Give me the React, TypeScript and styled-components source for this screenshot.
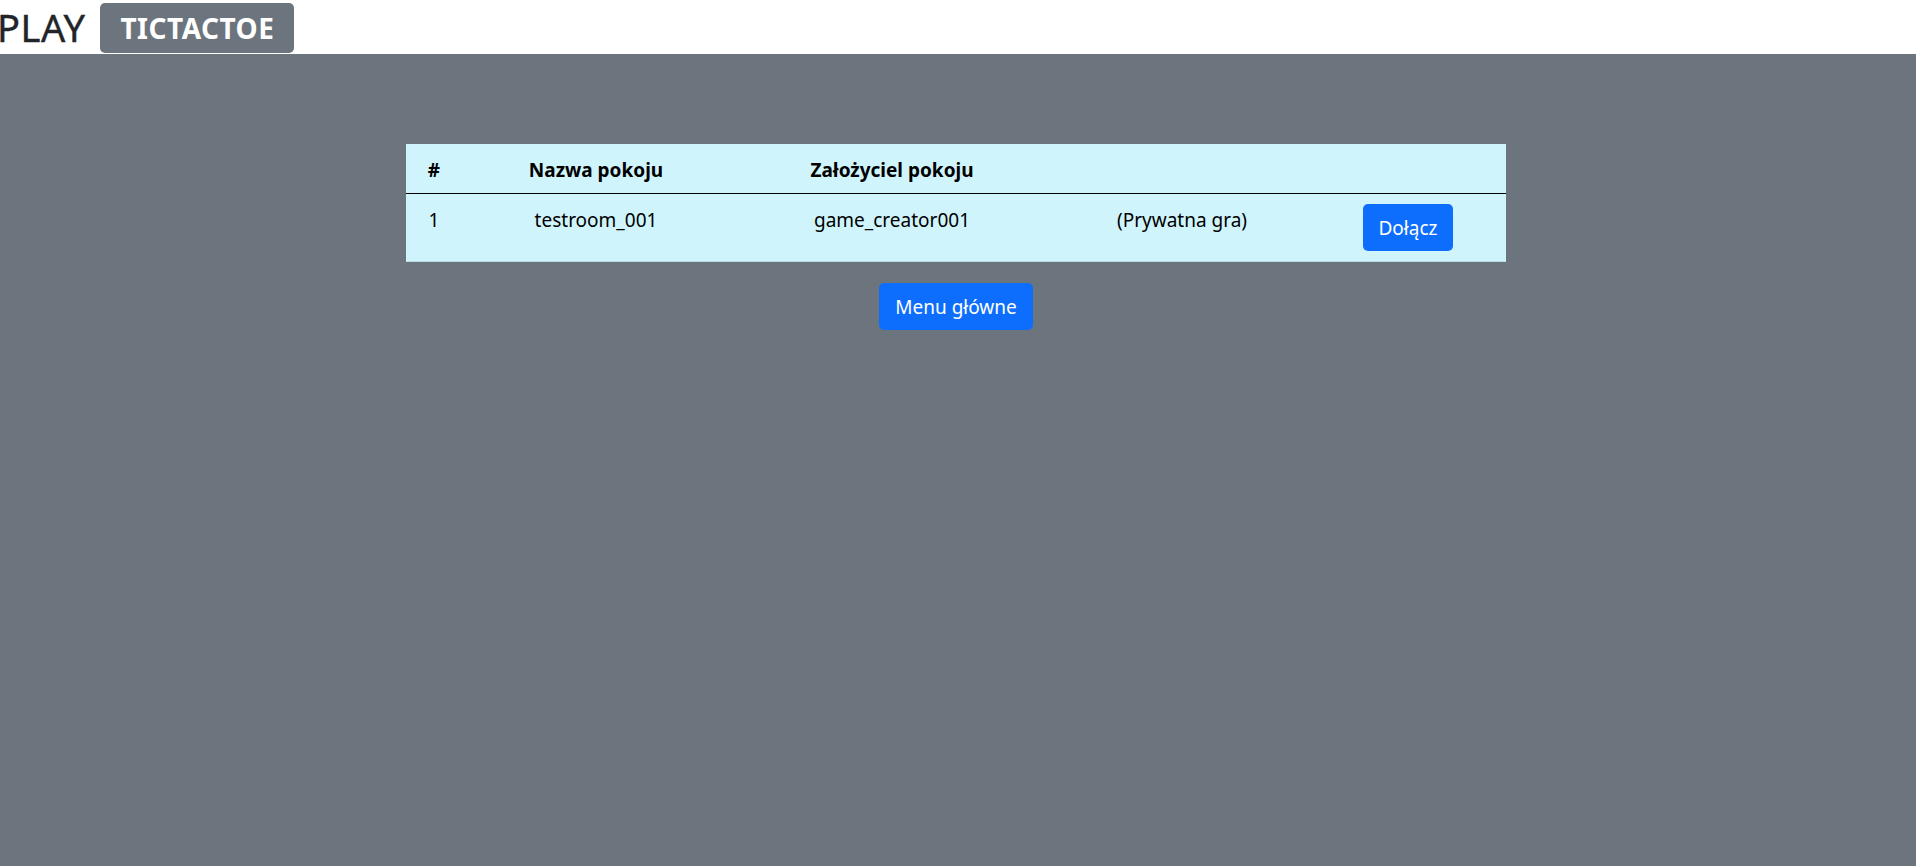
import styled, { createGlobalStyle } from "styled-components";

const GlobalStyle = createGlobalStyle`
  html, body {
    margin: 0;
    padding: 0;
    background-color: #6c757d;
  }

  body {
    font-family: "Noto Sans", "Open Sans", sans-serif;
    color: #212529;
  }
`;

const Page = styled.div`
  min-height: 100vh;
  background-color: #6c757d;
`;

const Header = styled.header`
  height: 54px;
  background-color: #fff;
  display: flex;
  align-items: center;
  gap: 15px;
`;

const Brand = styled.h1`
  margin: 0 0 0 -3px;
  font-size: 38px;
  font-weight: 400;
  line-height: 1;
  letter-spacing: 0.5px;
  color: #212529;
  -webkit-text-stroke: 0.4px #212529;
`;

const Badge = styled.span`
  height: 50px;
  padding: 0 20px;
  box-sizing: border-box;
  display: inline-flex;
  align-items: center;
  background-color: #6c757d;
  color: #fff;
  font-size: 28px;
  font-weight: 700;
  letter-spacing: 0.5px;
  border-radius: 5px;
  margin-top: 3px;
  align-self: flex-start;
`;

const Content = styled.main`
  width: 1100px;
  margin-left: 406px;
  padding-top: 90px;
  display: flex;
  flex-direction: column;
  align-items: center;
  gap: 21px;
`;

const Table = styled.div`
  width: 100%;
  background-color: #cff4fc;
  color: #000;
  border-bottom: 1px solid #badce3;
`;

const Row = styled.div<{ $head?: boolean }>`
  display: grid;
  grid-template-columns: 56px 268px 324px 256px 1fr;
  align-items: start;
  font-size: 19px;
  line-height: 29px;
  font-weight: ${(p) => (p.$head ? 700 : 400)};
  border-bottom: ${(p) => (p.$head ? "1px solid #000" : "none")};
`;

const Cell = styled.div`
  padding: 12px 0 8px;
  text-align: center;
  white-space: nowrap;
`;

const ButtonCell = styled.div`
  padding: 10px 0;
  display: flex;
  justify-content: center;
`;

const Button = styled.button`
  height: 47px;
  padding: 0 16px;
  border: none;
  border-radius: 5px;
  background-color: #0d6efd;
  color: #fff;
  font-family: inherit;
  font-size: 19px;
  cursor: pointer;

  &:hover {
    background-color: #0b5ed7;
  }
`;

const rooms = [
  { id: 1, name: "testroom_001", owner: "game_creator001", note: "(Prywatna gra)" },
];

export default function App() {
  return (
    <Page>
      <GlobalStyle />
      <Header>
        <Brand>PLAY</Brand>
        <Badge>TICTACTOE</Badge>
      </Header>
      <Content>
        <Table>
          <Row $head>
            <Cell>#</Cell>
            <Cell>Nazwa pokoju</Cell>
            <Cell>Założyciel pokoju</Cell>
            <Cell />
            <Cell />
          </Row>
          {rooms.map((room) => (
            <Row key={room.id}>
              <Cell>{room.id}</Cell>
              <Cell>{room.name}</Cell>
              <Cell>{room.owner}</Cell>
              <Cell>{room.note}</Cell>
              <ButtonCell>
                <Button>Dołącz</Button>
              </ButtonCell>
            </Row>
          ))}
        </Table>
        <Button>Menu główne</Button>
      </Content>
    </Page>
  );
}
